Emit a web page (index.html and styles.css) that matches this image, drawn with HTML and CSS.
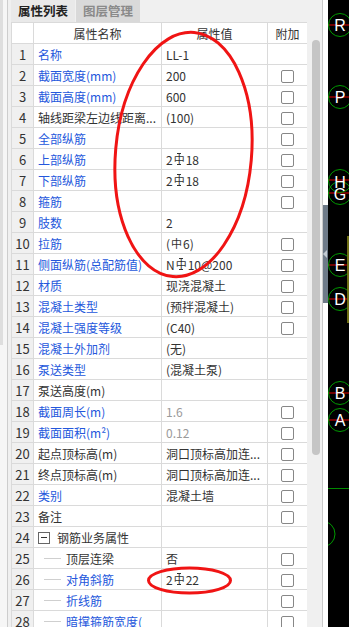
FILE: index.html
```html
<!DOCTYPE html>
<html lang="zh-CN">
<head>
    <meta charset="UTF-8">
    <meta name="viewport" content="width=device-width, initial-scale=1.0">
    <title>属性列表</title>
    <link rel="stylesheet" href="styles.css">
</head>
<body>
    <div class="app">
        <div class="edge"><div class="edge-bar"></div></div>

        <div class="panel">
            <div class="tabs">
                <div class="tab active">属性列表</div>
                <div class="tab">图层管理</div>
            </div>

            <table class="props">
                <colgroup>
                    <col class="c-no">
                    <col class="c-name">
                    <col class="c-val">
                    <col class="c-add">
                </colgroup>
                <thead>
                    <tr>
                        <th></th>
                        <th>属性名称</th>
                        <th>属性值</th>
                        <th>附加</th>
                    </tr>
                </thead>
                <tbody>
                    <tr><td class="no">1</td><td class="name link">名称</td><td class="val">LL-1</td><td class="add"></td></tr>
                    <tr><td class="no">2</td><td class="name link">截面宽度(mm)</td><td class="val">200</td><td class="add"><span class="chk"></span></td></tr>
                    <tr><td class="no">3</td><td class="name link">截面高度(mm)</td><td class="val">600</td><td class="add"><span class="chk"></span></td></tr>
                    <tr><td class="no">4</td><td class="name">轴线距梁左边线距离...</td><td class="val">(100)</td><td class="add"><span class="chk"></span></td></tr>
                    <tr><td class="no">5</td><td class="name link">全部纵筋</td><td class="val"></td><td class="add"><span class="chk"></span></td></tr>
                    <tr><td class="no">6</td><td class="name link">上部纵筋</td><td class="val">2<span class="bar g3">中</span>18</td><td class="add"><span class="chk"></span></td></tr>
                    <tr><td class="no">7</td><td class="name link">下部纵筋</td><td class="val">2<span class="bar g3">中</span>18</td><td class="add"><span class="chk"></span></td></tr>
                    <tr><td class="no">8</td><td class="name link">箍筋</td><td class="val"></td><td class="add"><span class="chk"></span></td></tr>
                    <tr><td class="no">9</td><td class="name link">肢数</td><td class="val">2</td><td class="add"></td></tr>
                    <tr><td class="no">10</td><td class="name link">拉筋</td><td class="val">(<span class="bar">中</span>6)</td><td class="add"><span class="chk"></span></td></tr>
                    <tr><td class="no">11</td><td class="name link">侧面纵筋(总配筋值)</td><td class="val">N<span class="bar g3">中</span>10@200</td><td class="add"><span class="chk"></span></td></tr>
                    <tr><td class="no">12</td><td class="name link">材质</td><td class="val">现浇混凝土</td><td class="add"><span class="chk"></span></td></tr>
                    <tr><td class="no">13</td><td class="name link">混凝土类型</td><td class="val">(预拌混凝土)</td><td class="add"><span class="chk"></span></td></tr>
                    <tr><td class="no">14</td><td class="name link">混凝土强度等级</td><td class="val">(C40)</td><td class="add"><span class="chk"></span></td></tr>
                    <tr><td class="no">15</td><td class="name link">混凝土外加剂</td><td class="val">(无)</td><td class="add"></td></tr>
                    <tr><td class="no">16</td><td class="name link">泵送类型</td><td class="val">(混凝土泵)</td><td class="add"></td></tr>
                    <tr><td class="no">17</td><td class="name">泵送高度(m)</td><td class="val"></td><td class="add"></td></tr>
                    <tr><td class="no">18</td><td class="name link">截面周长(m)</td><td class="val muted">1.6</td><td class="add"><span class="chk"></span></td></tr>
                    <tr><td class="no">19</td><td class="name link">截面面积(m²)</td><td class="val muted">0.12</td><td class="add"><span class="chk"></span></td></tr>
                    <tr><td class="no">20</td><td class="name">起点顶标高(m)</td><td class="val">洞口顶标高加连...</td><td class="add"><span class="chk"></span></td></tr>
                    <tr><td class="no">21</td><td class="name">终点顶标高(m)</td><td class="val">洞口顶标高加连...</td><td class="add"><span class="chk"></span></td></tr>
                    <tr><td class="no">22</td><td class="name link">类别</td><td class="val">混凝土墙</td><td class="add"><span class="chk"></span></td></tr>
                    <tr><td class="no">23</td><td class="name">备注</td><td class="val"></td><td class="add"><span class="chk"></span></td></tr>
                    <tr><td class="no">24</td><td class="name"><span class="fold"></span>钢筋业务属性</td><td class="val"></td><td class="add"></td></tr>
                    <tr><td class="no">25</td><td class="name child">顶层连梁</td><td class="val">否</td><td class="add"><span class="chk"></span></td></tr>
                    <tr><td class="no">26</td><td class="name child link">对角斜筋</td><td class="val">2<span class="bar g3">中</span>22</td><td class="add"><span class="chk"></span></td></tr>
                    <tr><td class="no">27</td><td class="name child link">折线筋</td><td class="val"></td><td class="add"><span class="chk"></span></td></tr>
                    <tr><td class="no">28</td><td class="name child link">暗撑箍筋宽度(</td><td class="val"></td><td class="add"><span class="chk"></span></td></tr>
                </tbody>
            </table>
        </div>

        <div class="vscroll"><div class="thumb"></div></div>

        <div class="splitter">
            <div class="collapse"><span class="arrow"></span></div>
        </div>

        <div class="cad">
            <svg width="21" height="627" viewBox="0 0 21 627">
                <g class="axis-lines">
                    <line x1="0" y1="25" x2="21" y2="25"/>
                    <line x1="0" y1="97" x2="21" y2="97"/>
                    <line x1="0" y1="180" x2="21" y2="180"/>
                    <line x1="0" y1="193" x2="21" y2="193"/>
                    <line x1="0" y1="265" x2="21" y2="265"/>
                    <line x1="0" y1="299" x2="21" y2="299"/>
                    <line x1="0" y1="393" x2="21" y2="393"/>
                    <line x1="0" y1="420" x2="21" y2="420"/>
                </g>
                <g class="axis-rings">
                    <circle cx="12" cy="25" r="11.5"/>
                    <circle cx="12" cy="97" r="11.5"/>
                    <circle cx="12" cy="181" r="11.5"/>
                    <circle cx="12" cy="193" r="11.5"/>
                    <circle cx="12" cy="265" r="11.5"/>
                    <circle cx="12" cy="299" r="11.5"/>
                    <circle cx="12" cy="393" r="11.5"/>
                    <circle cx="12" cy="420" r="11.5"/>
                    <circle cx="-6" cy="534" r="13"/>
                </g>
                <line class="wall" x1="0" y1="488.5" x2="21" y2="488.5"/>
                <line class="beam" x1="20" y1="236" x2="20" y2="323"/>
                <g class="axis-labels">
                    <text x="12" y="25">R</text>
                    <text x="12" y="97">P</text>
                    <text x="12" y="182">H</text>
                    <text x="12" y="194">G</text>
                    <text x="12" y="265">E</text>
                    <text x="12" y="299">D</text>
                    <text x="12" y="393">B</text>
                    <text x="12" y="420">A</text>
                </g>
            </svg>
        </div>

        <svg class="marks" width="349" height="627" viewBox="0 0 349 627">
            <ellipse cx="183.5" cy="154.5" rx="68" ry="122.5" transform="rotate(5 183.5 154.5)"/>
            <ellipse cx="189.5" cy="580.5" rx="41" ry="12.5"/>
        </svg>
    </div>
</body>
</html>
```

FILE: styles.css
```css
body {
    margin: 0;
    padding: 0;
    font-family: "Noto Sans CJK SC", "Microsoft YaHei", sans-serif;
    font-size: 12px;
    color: #333;
    background-color: #f0f0f0;
}

.app {
    position: relative;
    display: flex;
    width: 349px;
    height: 627px;
    overflow: hidden;
    background-color: #f0f0f0;
}

/* left gutter */
.edge {
    flex: none;
    width: 8px;
    margin-right: 3px;
    border-right: 1px solid #cdcdcd;
    box-sizing: border-box;
    background-color: #f6f6f6;
}

.edge-bar {
    width: 3px;
    height: 345px;
    background-color: #dedede;
}

/* property panel */
.panel {
    flex: none;
    width: 296px;
    display: flex;
    flex-direction: column;
}

.tabs {
    display: flex;
    gap: 1px;
    height: 26px;
    align-items: flex-end;
}

.tab {
    width: 64px;
    height: 22px;
    line-height: 22px;
    text-align: center;
    font-weight: bold;
    font-size: 12.5px;
    color: #8a8a8a;
    background-color: #d9d9d9;
}

.tab.active {
    color: #222;
    background-color: #e9e9e9;
}

table.props {
    width: 296px;
    table-layout: fixed;
    border-collapse: collapse;
    background-color: #fff;
}

.c-no { width: 22px; }
.c-name { width: 128px; }
.c-val { width: 106px; }
.c-add { width: 40px; }

.props th,
.props td {
    height: 21px;
    padding: 0 4px;
    border: 1px solid #dadada;
    white-space: nowrap;
    overflow: hidden;
    box-sizing: border-box;
}

.props th {
    font-weight: normal;
    color: #333;
    text-align: center;
    background-color: #fff;
}

.props td.no {
    padding: 0;
    text-align: center;
    font-size: 13px;
    color: #333;
    background-color: #f0f0f0;
}

.props td.name {
    color: #333;
}

.props td.link {
    color: #2457dc;
}

.props td.val {
    color: #333;
}

.props td.muted {
    color: #9a9a9a;
}

.props td.add {
    padding: 0;
    text-align: center;
}

.chk {
    display: inline-block;
    width: 11px;
    height: 11px;
    margin-top: 3px;
    vertical-align: top;
    border: 1px solid #878787;
    border-radius: 2px;
    background-color: #fff;
}

/* rebar grade glyph */
.bar {
    position: relative;
    display: inline-block;
    font-size: 11px;
    line-height: 1;
    margin: 0 1px;
    vertical-align: 1px;
}

.g3::before,
.g3::after {
    content: "";
    position: absolute;
    left: 50%;
    width: 4px;
    height: 1px;
    margin-left: -2px;
    background-color: currentColor;
}

.g3::before { top: -1px; }
.g3::after { bottom: 0; }

/* tree nodes */
.fold {
    position: relative;
    display: inline-block;
    width: 10px;
    height: 10px;
    margin: 0 7px 0 0;
    vertical-align: -1px;
    border: 1px solid #666;
    background-color: #fff;
}

.fold::after {
    content: "";
    position: absolute;
    left: 2px;
    top: 4px;
    width: 6px;
    height: 1px;
    background-color: #333;
}

.props td.child {
    position: relative;
    padding-left: 32px;
}

.props td.child::before {
    content: "";
    position: absolute;
    left: 10px;
    top: 10px;
    width: 17px;
    height: 1px;
    background-color: #cfcfcf;
}

/* scroll track */
.vscroll {
    flex: none;
    width: 15px;
    position: relative;
    background-color: #f0f0f0;
}

.thumb {
    margin: 40px 2px 0 5px;
    height: 415px;
    border-radius: 4px;
    background-color: #c5c5c5;
}

.splitter {
    flex: none;
    width: 6px;
    border-left: 1px solid #c9c9c9;
    box-sizing: border-box;
    background-color: #fff;
}

.collapse {
    margin-top: 205px;
    height: 98px;
    display: flex;
    align-items: center;
    background-color: #6e7a88;
}

.arrow {
    width: 0;
    height: 0;
    border-top: 4px solid transparent;
    border-bottom: 4px solid transparent;
    border-right: 4px solid #c3cad2;
}

/* drawing area */
.cad {
    flex: none;
    width: 21px;
    background-color: #000;
}

.cad svg {
    display: block;
}

.axis-lines line {
    stroke: #e00000;
    stroke-width: 1;
}

.axis-rings circle {
    fill: none;
    stroke: #009a00;
    stroke-width: 1;
}

.wall {
    stroke: #008a00;
    stroke-width: 1;
}

.beam {
    stroke: #6e6e14;
    stroke-width: 2;
}

.axis-labels text {
    fill: #fff;
    font-family: "Liberation Sans", Arial, sans-serif;
    font-size: 16px;
    text-anchor: middle;
    dominant-baseline: central;
}

/* red annotations */
.marks {
    position: absolute;
    left: 0;
    top: 0;
    pointer-events: none;
}

.marks ellipse {
    fill: none;
    stroke: #f01414;
    stroke-width: 3;
}
```
